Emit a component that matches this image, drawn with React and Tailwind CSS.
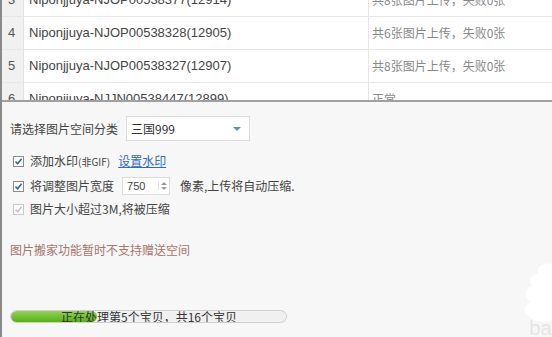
import React from 'react';

const rows = [
  { no: 3, name: 'Niponjjuya-NJOP00538377(12914)', status: '共8张图片上传，失败0张' },
  { no: 4, name: 'Niponjjuya-NJOP00538328(12905)', status: '共6张图片上传，失败0张' },
  { no: 5, name: 'Niponjjuya-NJOP00538327(12907)', status: '共8张图片上传，失败0张' },
  { no: 6, name: 'Niponjjuya-NJJN00538447(12899)', status: '正常' },
];

const cjk = { fontFamily: '"Noto Sans CJK SC", "Liberation Sans", sans-serif' };

const Check = ({ disabled }) => (
  <span
    className={`w-[11px] h-[11px] border flex items-center justify-center bg-white ${
      disabled ? 'border-[#c8c8c8]' : 'border-[#8c8c8c]'
    }`}
  >
    <svg width="9" height="9" viewBox="0 0 9 9">
      <path
        d="M1.5 4.5 L3.6 6.8 L7.6 1.8"
        fill="none"
        stroke={disabled ? '#c4c4c4' : '#2f5fa8'}
        strokeWidth="1.5"
      />
    </svg>
  </span>
);

const App = () => {
  return (
    <div className="w-[552px] h-[337px] overflow-hidden bg-[#f7f7f7] relative border-l-2 border-[#8a8a8a] text-[#333]" style={cjk}>
      {/* Table */}
      <div className="h-[102px] overflow-hidden bg-white border-b-2 border-[#a0a0a0]">
        <div className="-mt-[16px]">
          {rows.map(r => (
            <div key={r.no} className="flex h-[33px] border-b border-[#e8e8e8]">
              <div className="w-[22px] bg-[#f1f1f1] border-r border-[#e2e2e2] flex items-center pl-[6px] text-[13px] text-[#555]" style={{ fontFamily: '"Liberation Sans", sans-serif' }}>
                {r.no}
              </div>
              <div className="w-[345px] border-r border-[#e6e6e6] flex items-center pl-[5px] text-[13px] text-[#444]" style={{ fontFamily: '"Liberation Sans", sans-serif' }}>
                {r.name}
              </div>
              <div className="flex-1 flex items-center pl-[3px] text-[12px] text-[#888]">
                {r.status}
              </div>
            </div>
          ))}
        </div>
      </div>

      {/* Settings */}
      <div className="pl-[8px] pt-[14px] text-[12px] text-[#444]">
        <div className="flex items-center h-[25px]">
          <span className="w-[116px]">请选择图片空间分类</span>
          <div className="w-[124px] h-[25px] bg-white border border-[#dcdcdc] flex items-center justify-between pl-[4px] pr-[8px]">
            <span className="text-[12px] text-[#333]">三国999</span>
            <span className="w-0 h-0 border-l-[4px] border-r-[4px] border-t-[4px] border-l-transparent border-r-transparent border-t-[#5b8fc9]"></span>
          </div>
        </div>

        <div className="flex items-center h-[20px] mt-[10px] pl-[3px] gap-[6px]">
          <Check />
          <span>添加水印<span className="text-[10px]">(非GIF)</span></span>
          <span className="ml-[2px] text-[#2f6cc0] underline">设置水印</span>
        </div>

        <div className="flex items-center h-[20px] mt-[5px] pl-[3px] gap-[6px]">
          <Check />
          <span>将调整图片宽度</span>
          <div className="ml-[2px] w-[48px] h-[18px] bg-white border border-[#dcdcdc] flex items-center justify-between pl-[4px] pr-[2px]">
            <span className="text-[11px]" style={{ fontFamily: '"Liberation Sans", sans-serif' }}>750</span>
            <div className="flex flex-col items-center gap-[2px] border-l border-[#e2e2e2] pl-[2px]">
              <span className="w-0 h-0 border-l-[3px] border-r-[3px] border-b-[3px] border-l-transparent border-r-transparent border-b-[#999]"></span>
              <span className="w-0 h-0 border-l-[3px] border-r-[3px] border-t-[3px] border-l-transparent border-r-transparent border-t-[#999]"></span>
            </div>
          </div>
          <span className="ml-[4px]">像素,上传将自动压缩.</span>
        </div>

        <div className="flex items-center h-[20px] mt-[3px] pl-[3px] gap-[6px]">
          <Check disabled />
          <span>图片大小超过3M,将被压缩</span>
        </div>

        <div className="mt-[22px] text-[#a8746c]">图片搬家功能暂时不支持赠送空间</div>
      </div>

      {/* Progress */}
      <div className="absolute left-[8px] top-[310px] w-[277px] h-[13px] rounded-full border border-[#cfcfcf] bg-[#f0f0f0] overflow-hidden">
        <div className="h-full w-[86px] rounded-full bg-gradient-to-b from-[#8fd64a] to-[#5aac1f]"></div>
        <div className="absolute inset-0 flex items-center pl-[50px] text-[12px] leading-none text-[#333]">
          正在处理第5个宝贝，共16个宝贝
        </div>
      </div>

      {/* watermark */}
      <svg className="absolute right-0 top-[262px]" width="50" height="62" viewBox="0 0 50 62">
        <path d="M50 2 C40 0 34 6 36 12 C28 12 26 20 30 24 C22 26 22 36 28 40 C20 44 22 54 30 56 C36 62 46 60 50 58 Z" fill="#ffffff" />
      </svg>
      <div className="absolute right-[-4px] bottom-[-6px] text-[20px] text-[#e6e6e6]" style={{ fontFamily: '"Liberation Sans", sans-serif' }}>bai</div>
    </div>
  );
};

export default App;
